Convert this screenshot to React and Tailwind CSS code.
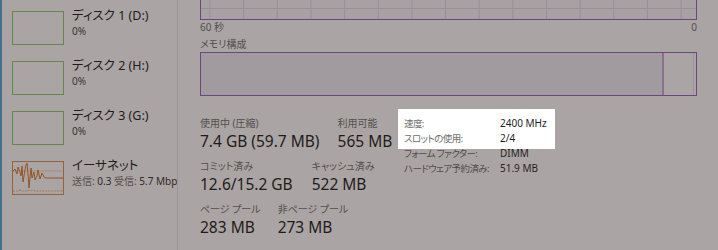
import React from 'react';

const font = "font-['Noto_Sans','Noto_Sans_CJK_JP',sans-serif] [font-feature-settings:'palt']";

function DiskItem({ title, sub }) {
  return (
    <div className="flex h-[50px] shrink-0">
      <div className="ml-[10px] mt-[11px] h-[34px] w-[52px] shrink-0 border border-[#8fcc70] bg-white" />
      <div className="ml-[8px] mt-[8px] whitespace-nowrap">
        <div className="text-[12.5px] leading-[16px] text-[#1a1a1a]">{title}</div>
        <div className="text-[10px] leading-[14px] text-[#444]">{sub}</div>
      </div>
    </div>
  );
}

function EthernetItem() {
  const pts =
    '0,9 2,7 4,12 5,5 7,10 8,14 9,4 10,20 12,8 13,3 14,1 15,12 16,26 18,6 19,16 21,10 22,18 24,14 25,8 27,17 29,11 31,15 33,16 50,16';
  return (
    <div className="flex h-[50px] shrink-0">
      <div className="ml-[10px] mt-[11px] h-[34px] w-[52px] shrink-0 border border-[#e39048] bg-white">
        <svg width="50" height="32" viewBox="0 0 50 32">
          <line x1="0" y1="9" x2="50" y2="9" stroke="#f1d3b8" strokeWidth="1" />
          <polyline points={pts} fill="none" stroke="#d9792c" strokeWidth="1" />
          <polyline
            points="0,29 6,29 7,27 8,29 14,29 15,28 16,29 20,28 22,29 50,29"
            fill="none"
            stroke="#e9b488"
            strokeWidth="1"
            strokeDasharray="2 1"
          />
        </svg>
      </div>
      <div className="ml-[8px] mt-[8px] whitespace-nowrap">
        <div className="text-[12.5px] leading-[16px] text-[#1a1a1a]">イーサネット</div>
        <div className="text-[10px] leading-[14px]">
          <span className="text-[#707070]">送信: </span>
          <span className="text-[#333]">0.3 </span>
          <span className="text-[#707070]">受信: </span>
          <span className="text-[#333]">5.7 Mbps</span>
        </div>
      </div>
    </div>
  );
}

function Stat({ label, value }) {
  return (
    <div className="whitespace-nowrap">
      <div className="text-[10px] leading-[14px] text-[#707070]">{label}</div>
      <div className="text-[15.5px] leading-[22px] text-[#1a1a1a]">{value}</div>
    </div>
  );
}

const info = [
  ['速度:', '2400 MHz'],
  ['スロットの使用:', '2/4'],
  ['フォーム ファクター:', 'DIMM'],
  ['ハードウェア予約済み:', '51.9 MB'],
];

export default function App() {
  const grid = Array.from({ length: 15 }, (_, k) => 9 + k * 33.65);

  return (
    <div className={`relative flex h-[250px] w-[718px] overflow-hidden bg-white ${font}`}>
      {/* window accent edge */}
      <div className="w-[2px] shrink-0 bg-[#58a6dc]" />

      {/* left list */}
      <div className="flex w-[175px] shrink-0 flex-col overflow-hidden">
        <DiskItem title="ディスク 1 (D:)" sub="0%" />
        <DiskItem title="ディスク 2 (H:)" sub="0%" />
        <DiskItem title="ディスク 3 (G:)" sub="0%" />
        <EthernetItem />
      </div>
      <div className="w-[1px] shrink-0 bg-[#e4e4e4]" />

      {/* memory details */}
      <div className="flex min-w-0 flex-1 flex-col pl-[22px] pr-[21px]">
        <div className="mt-[-20px] h-[40px] border border-[#9a5fc4] bg-[#fbf8fd]">
          <svg width="100%" height="38">
            {grid.map((x) => (
              <line key={x} x1={x} y1="0" x2={x} y2="38" stroke="#e4d9ec" strokeWidth="1" />
            ))}
            <line x1="0" y1="27.5" x2="497" y2="27.5" stroke="#e4d9ec" strokeWidth="1" />
          </svg>
        </div>
        <div className="flex h-[14px] justify-between text-[10px] leading-[14px] text-[#707070]">
          <span>60 秒</span>
          <span>0</span>
        </div>
        <div className="mt-[3px] text-[10px] leading-[14px] text-[#707070]">メモリ構成</div>
        <div className="mt-[1px] flex h-[44px] border border-[#9a5fc4]">
          <div className="w-[461px] bg-[#f1edf5]" />
          <div className="w-[2px] bg-[#c6a9da]" />
          <div className="w-[29px]" />
          <div className="w-[1px] bg-[#ebe2f0]" />
          <div className="flex-1" />
        </div>

        <div className="mt-[20px] flex items-start">
          <div className="flex w-[204px] shrink-0 flex-col gap-[7px]">
            <div className="flex gap-[18px]">
              <Stat label="使用中 (圧縮)" value="7.4 GB (59.7 MB)" />
              <Stat label="利用可能" value="565 MB" />
            </div>
            <div className="flex gap-[19px]">
              <Stat label="コミット済み" value="12.6/15.2 GB" />
              <Stat label="キャッシュ済み" value="522 MB" />
            </div>
            <div className="flex gap-[17px]">
              <Stat label="ページ プール" value="283 MB" />
              <Stat label="非ページ プール" value="273 MB" />
            </div>
          </div>
          <div className="grid grid-cols-[96px_auto] content-start text-[10px] leading-[15px]">
            {info.map(([k, v]) => (
              <React.Fragment key={k}>
                <div className="whitespace-nowrap text-[9.5px] tracking-[-0.6px] text-[#6d6d6d]">{k}</div>
                <div className="whitespace-nowrap text-[#1f1f1f]">{v}</div>
              </React.Fragment>
            ))}
          </div>
        </div>
      </div>

      {/* dim overlay with highlighted hole */}
      <div className="pointer-events-none absolute left-[398px] top-[109px] h-[40px] w-[157px] shadow-[0_0_0_2000px_rgba(43,30,28,0.4)]" />
    </div>
  );
}
